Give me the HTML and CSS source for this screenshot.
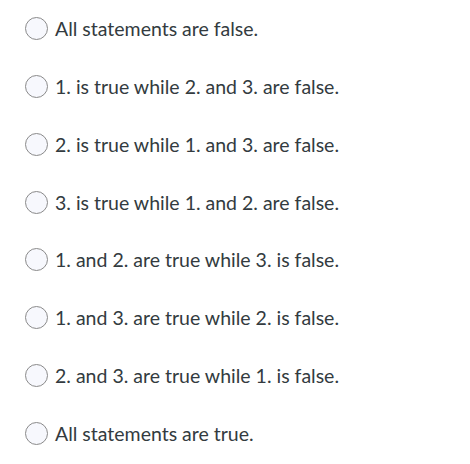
FILE: index.html
```html
<!DOCTYPE html>
<html>
<head>
<meta charset="utf-8">
<link rel="stylesheet" href="styles.css">
</head>
<body>
<ul class="answers">
  <li class="answer"><span class="radio"></span><span class="label">All statements are false.</span></li>
  <li class="answer"><span class="radio"></span><span class="label">1. is true while 2. and 3. are false.</span></li>
  <li class="answer"><span class="radio"></span><span class="label">2. is true while 1. and 3. are false.</span></li>
  <li class="answer"><span class="radio"></span><span class="label">3. is true while 1. and 2. are false.</span></li>
  <li class="answer"><span class="radio"></span><span class="label">1. and 2. are true while 3. is false.</span></li>
  <li class="answer"><span class="radio"></span><span class="label">1. and 3. are true while 2. is false.</span></li>
  <li class="answer"><span class="radio"></span><span class="label">2. and 3. are true while 1. is false.</span></li>
  <li class="answer"><span class="radio"></span><span class="label">All statements are true.</span></li>
</ul>
</body>
</html>
```
FILE: styles.css
```css
html, body {
  margin: 0;
  padding: 0;
  background: #fff;
}
body {
  font-family: Lato, "Noto Sans", sans-serif;
  color: #333b40;
  font-size: 19.5px;
}
.answers {
  list-style: none;
  margin: 0;
  padding: 17px 0 0 25px;
  display: flex;
  flex-direction: column;
  gap: 34.85px;
}
.answer {
  display: flex;
  align-items: center;
  gap: 7px;
  height: 23px;
}
.radio {
  width: 21px;
  height: 21px;
  border: 1px solid #8a8a8a;
  border-radius: 50%;
  background: #f7f8fd;
  flex: none;
}
.label {
  line-height: 23px;
}
```
